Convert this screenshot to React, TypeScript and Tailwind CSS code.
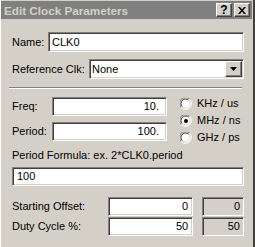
import React from "react";

const sunken =
  "border border-t-[#808080] border-l-[#808080] border-r-white border-b-white shadow-[inset_1px_1px_0_#404040,inset_-1px_-1px_0_#d4d0c8]";
const raised =
  "border border-t-white border-l-white border-r-[#404040] border-b-[#404040] shadow-[inset_-1px_-1px_0_#808080]";

function Radio({ checked }: { checked?: boolean }) {
  return (
    <svg width="12" height="12" viewBox="0 0 12 12" className="shrink-0">
      <circle cx="6" cy="6" r="5" fill="#fff" />
      <path d="M1.2 9.6 A5.5 5.5 0 0 1 9.6 1.2" fill="none" stroke="#808080" strokeWidth="1" />
      <path d="M9.6 1.2 A5.5 5.5 0 0 1 1.2 9.6" fill="none" stroke="#ffffff" strokeWidth="1" />
      <path d="M2.3 8.7 A4.4 4.4 0 0 1 8.7 2.3" fill="none" stroke="#404040" strokeWidth="1" />
      <path d="M8.7 2.3 A4.4 4.4 0 0 1 2.3 8.7" fill="none" stroke="#d4d0c8" strokeWidth="1" />
      {checked && <circle cx="6" cy="6" r="2" fill="#000" />}
    </svg>
  );
}

export default function App() {
  return (
    <div
      className="relative w-[255px] h-[247px] overflow-hidden bg-[#d4d0c8] text-[11px] text-black leading-[13px]"
      style={{ fontFamily: '"Liberation Sans", Arial, sans-serif' }}
    >
      <div className="flex h-full flex-col border-l border-l-white border-r-2 border-r-[#404040] pr-[1px]">
        {/* Title bar */}
        <div className="mt-[1px] flex h-[18px] items-center justify-between bg-[#808080] pl-[3px] pr-[2px]">
          <span className="text-[11.7px] font-bold text-[#d4d0c8]">Edit Clock Parameters</span>
          <div className="flex gap-[2px]">
            <div className={`flex h-[14px] w-[16px] items-center justify-center bg-[#d4d0c8] text-[12px] font-bold ${raised}`}>?</div>
            <div className={`flex h-[14px] w-[16px] items-center justify-center bg-[#d4d0c8] ${raised}`}>
              <svg width="8" height="7" viewBox="0 0 8 7">
                <path d="M0 0h2l2 2.5L6 0h2L5 3.5 8 7H6L4 4.5 2 7H0l3-3.5z" fill="#000" />
              </svg>
            </div>
          </div>
        </div>

        <div className="flex flex-col pl-[11px] pr-[8px]">
          {/* Name */}
          <div className="mt-[13px] flex h-[20px] items-center">
            <span className="w-[36px]">Name:</span>
            <div className={`flex h-[20px] flex-1 items-center bg-white pl-[3px] ${sunken}`}>CLK0</div>
          </div>

          {/* Reference Clk */}
          <div className="mt-[7px] flex h-[20px] items-center">
            <span className="w-[77px]">Reference Clk:</span>
            <div className={`flex h-[20px] flex-1 items-center bg-white pl-[2px] pr-[1px] ${sunken}`}>
              <span className="flex-1">None</span>
              <div className={`flex h-[16px] w-[17px] items-center justify-center bg-[#d4d0c8] ${raised}`}>
                <svg width="7" height="4" viewBox="0 0 7 4">
                  <path d="M0 0h7L3.5 4z" fill="#000" />
                </svg>
              </div>
            </div>
          </div>

          {/* Separator */}
          <div className="mt-[8px] mr-[2px] ml-[-3px] h-[2px] border-t border-t-[#808080] border-b border-b-white" />

          {/* Freq / Period + radios */}
          <div className="mt-[6px] flex">
            <div className="flex w-[155px] flex-col pt-[2px]">
              <div className="flex h-[19px] items-center">
                <span className="w-[40px]">Freq:</span>
                <div className={`flex h-[19px] w-[115px] items-center justify-end bg-white pr-[7px] ${sunken}`}>10.</div>
              </div>
              <div className="mt-[6px] flex h-[19px] items-center">
                <span className="w-[40px]">Period:</span>
                <div className={`flex h-[19px] w-[115px] items-center justify-end bg-white pr-[7px] ${sunken}`}>100.</div>
              </div>
            </div>
            <div className="ml-[13px] flex flex-col">
              <div className="flex h-[17px] items-center gap-[5px]">
                <Radio />
                <span>KHz / us</span>
              </div>
              <div className="flex h-[17px] items-center gap-[5px]">
                <Radio checked />
                <span>MHz / ns</span>
              </div>
              <div className="flex h-[17px] items-center gap-[5px]">
                <Radio />
                <span>GHz / ps</span>
              </div>
            </div>
          </div>

          {/* Period formula */}
          <div className="mt-[3px] h-[13px]">Period Formula: ex. 2*CLK0.period</div>
          <div className={`mt-[5px] flex h-[19px] items-center bg-white pl-[4px] ${sunken}`}>100</div>

          {/* Starting offset */}
          <div className="mt-[11px] flex h-[19px] items-center">
            <span className="w-[96px]">Starting Offset:</span>
            <div className={`flex h-[19px] w-[86px] items-center justify-end bg-white pr-[4px] ${sunken}`}>0</div>
            <div className={`ml-[9px] flex h-[19px] w-[42px] items-center justify-end bg-[#d4d0c8] pr-[3px] ${sunken}`}>0</div>
          </div>
          <div className="mt-[1px] flex h-[19px] items-center">
            <span className="w-[96px]">Duty Cycle %:</span>
            <div className={`flex h-[19px] w-[86px] items-center justify-end bg-white pr-[4px] ${sunken}`}>50</div>
            <div className={`ml-[9px] flex h-[19px] w-[42px] items-center justify-end bg-[#d4d0c8] pr-[3px] ${sunken}`}>50</div>
          </div>
        </div>
      </div>
    </div>
  );
}
